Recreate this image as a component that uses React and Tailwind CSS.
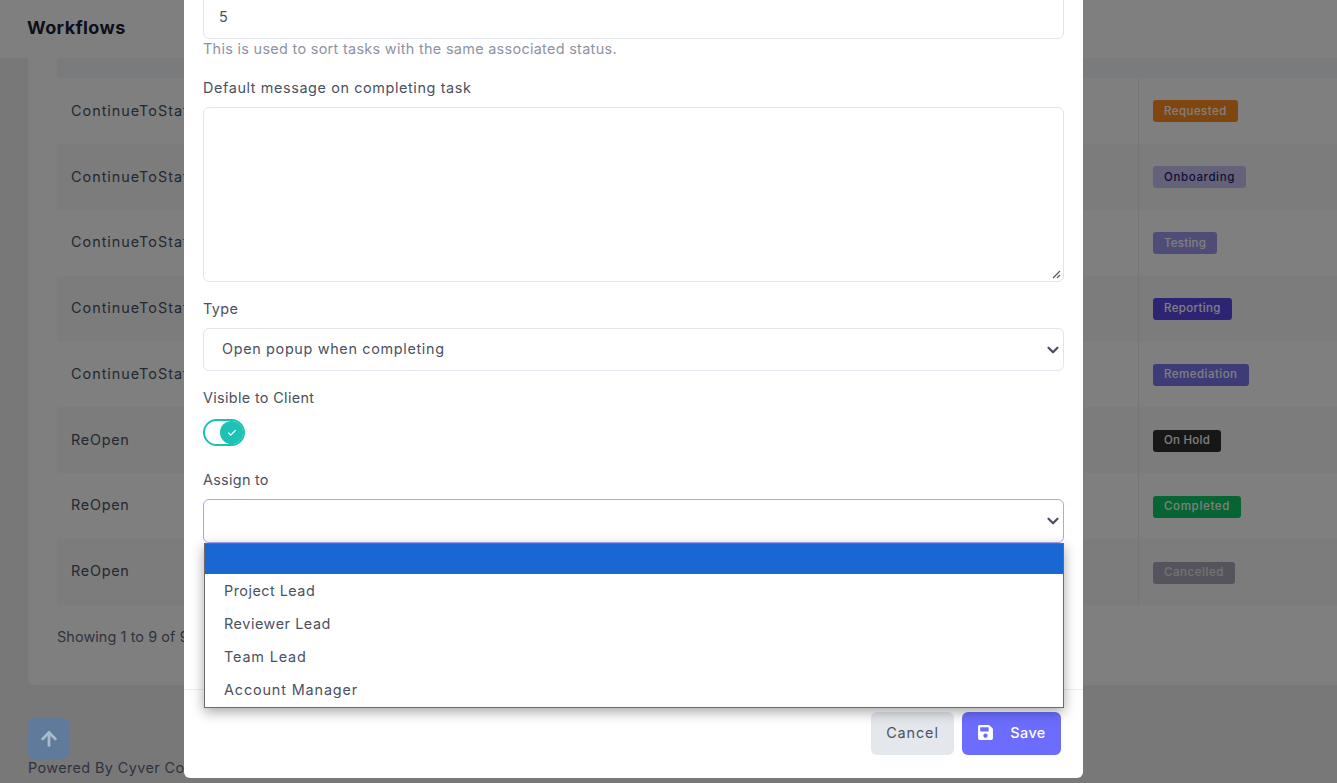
import React from "react";
import { ArrowUp, Check, ChevronDown } from "lucide-react";
import { FaSave } from "react-icons/fa";

const rows = [
  ["ContinueToStatus", "tracking-[1px] pb-[1px]", "Requested", "bg-[#ff8f1f] text-[#ffffff] tracking-[0.45px]"],
  ["ContinueToStatus", "tracking-[1px] pb-[1px]", "Onboarding", "bg-[#c8c5f5] text-[#1f1a6b] tracking-[0.62px]"],
  ["ContinueToStatus", "tracking-[1px] pb-[1px]", "Testing", "bg-[#9e9bf0] text-[#ffffff] tracking-[0.25px]"],
  ["ContinueToStatus", "tracking-[1px] pb-[1px]", "Reporting", "bg-[#5b4be6] text-[#ffffff] tracking-[0.34px]"],
  ["ContinueToStatus", "tracking-[1px] pb-[1px]", "Remediation", "bg-[#7c78ee] text-[#ffffff] tracking-[0.48px]"],
  ["ReOpen", "tracking-[0.73px] pb-[2px]", "On Hold", "bg-[#2f2f2f] text-[#ffffff] tracking-[0.25px]"],
  ["ReOpen", "tracking-[0.73px] pb-[2px]", "Completed", "bg-[#0ec866] text-[#ffffff] tracking-[0.67px]"],
  ["ReOpen", "tracking-[0.73px] pb-[2px]", "Cancelled", "bg-[#aaa9b8] text-[#e5e5ea] tracking-[0.56px]"],
];

const options = [
  ["Project Lead", "tracking-[0.48px]"],
  ["Reviewer Lead", "tracking-[0.55px]"],
  ["Team Lead", "tracking-[0.85px]"],
  ["Account Manager", "tracking-[0.87px]"],
];

function Label({ children, className }) {
  return <label className={`block text-[14.4px] leading-[22px] text-[#4b5163] ${className}`}>{children}</label>;
}

function SelectBox({ children, focus }) {
  return (
    <div className={`flex items-center justify-between rounded-md border bg-white pl-[18px] pr-[1px] text-[14.4px] tracking-[0.67px] text-[#4b5163] ${focus ? "h-[44px] border-[#a4a9f5]" : "h-[43px] border-[#e3e5ec]"}`}>
      <span className="pb-[2px]">{children}</span>
      <ChevronDown size={18} strokeWidth={3} className="text-[#4b5163]" />
    </div>
  );
}

export default function App() {
  return (
    <div className="relative h-[783px] w-[1337px] overflow-hidden bg-[#f0f0f2] font-['Inter','Liberation_Sans',sans-serif]">
      <header className="flex h-[58px] items-center bg-white pb-[3px] pl-[27px]">
        <h1 className="text-[18px] font-bold tracking-[0.4px] text-[#1c2033]">Workflows</h1>
      </header>
      <main className="pl-[28px]">
        <section className="h-[627px] rounded-bl-md bg-white pl-[29px]">
          <div className="h-[20px] bg-[#f5f6f9]" />
          <div className="flex flex-col">
            {rows.map((r, i) => (
              <div key={r[2]} className={`flex h-[65.9px] items-center ${i % 2 === 0 ? "bg-white" : "bg-[#f8f9fb]"}`}>
                <div className={`w-[1081px] pl-[14px] text-[14.4px] text-[#4b5163] ${r[1]}`}>{r[0]}</div>
                <div className="flex h-full items-center border-l border-[#e8eaf0] pl-[14px] pt-[1px]">
                  <span className={`flex h-[22px] items-center rounded-[3px] px-[11px] text-[11.5px] font-medium ${r[3]}`}>{r[2]}</span>
                </div>
              </div>
            ))}
          </div>
          <p className="pt-[21px] text-[14.4px] tracking-[0.1px] text-[#5f6780]">Showing 1 to 9 of 9 entries</p>
        </section>
        <p className="mt-[74px] text-[14.4px] leading-[18px] tracking-[0.403px] text-[#5f6780]">Powered By Cyver Core</p>
      </main>

      <div className="absolute inset-0 bg-black/50" />

      <button className="absolute left-[28px] top-[718px] flex h-[41px] w-[41px] items-center justify-center rounded-md bg-[#607a9b] text-[#a9bacd]">
        <ArrowUp size={22} strokeWidth={3} />
      </button>

      <div className="absolute left-[184px] top-0 h-[778px] w-[899px] rounded-b-md bg-white">
        <div className="px-[19px]">
          <div className="mt-[-4px] flex h-[43px] items-center rounded-b-md border border-[#e3e5ec] pb-[2px] pl-[15px] text-[14.4px] text-[#4b5163]">5</div>
          <p className="text-[14.4px] leading-[20px] tracking-[0.318px] text-[#8e92a3]">This is used to sort tasks with the same associated status.</p>
          <div className="mt-[18px]"><Label className="tracking-[0.61px]">Default message on completing task</Label></div>
          <div className="relative mt-[8px] h-[175px] rounded-md border border-[#e3e5ec]">
            <svg className="absolute bottom-[2px] right-[2px]" width="9" height="9" viewBox="0 0 9 9" fill="none" stroke="#555" strokeWidth="1.2"><path d="M1 8 8 1M5 8 8 5" /></svg>
          </div>
          <div className="mt-[16px]"><Label className="tracking-[0.403px]">Type</Label></div>
          <div className="mt-[8px]"><SelectBox>Open popup when completing</SelectBox></div>
          <div className="mt-[16px]"><Label className="tracking-[0.34px]">Visible to Client</Label></div>
          <div className="mt-[10px] flex h-[27px] w-[42px] items-center justify-end rounded-full border-2 border-[#1cc2b4] bg-white">
            <span className="flex h-[23px] w-[23px] items-center justify-center rounded-full bg-[#1cc2b4] text-white">
              <Check size={10} strokeWidth={3} />
            </span>
          </div>
          <div className="mt-[23px]"><Label className="tracking-[0.29px]">Assign to</Label></div>
          <div className="mt-[8px]"><SelectBox focus> </SelectBox></div>
        </div>
        <div className="mt-[146px] flex h-[89px] justify-end gap-[8px] border-t border-[#eceef3] pr-[22px] pt-[22px]">
          <button className="h-[43px] w-[83px] rounded-md bg-[#e4e8ec] pb-[2px] text-[14.4px] tracking-[0.9px] text-[#4b5163]">Cancel</button>
          <button className="flex h-[43px] w-[99px] items-center justify-center gap-[16px] rounded-md bg-[#6c6cff] pb-[2px] text-[14.4px] font-medium tracking-[0.403px] text-white">
            <FaSave size={17} />
            Save
          </button>
        </div>

        <div className="absolute left-[20px] top-[543px] h-[165px] w-[860px] border border-[#6b6b6b] bg-white shadow-[0_4px_12px_rgba(0,0,0,0.35)]">
          <div className="h-[30px] bg-[#1967d2]" />
          <div className="flex flex-col pl-[19px] text-[14.4px] text-[#4b5163]">
            {options.map((o) => (
              <div key={o[0]} className={`flex h-[33px] items-center ${o[1]}`}>{o[0]}</div>
            ))}
          </div>
        </div>
      </div>
    </div>
  );
}
